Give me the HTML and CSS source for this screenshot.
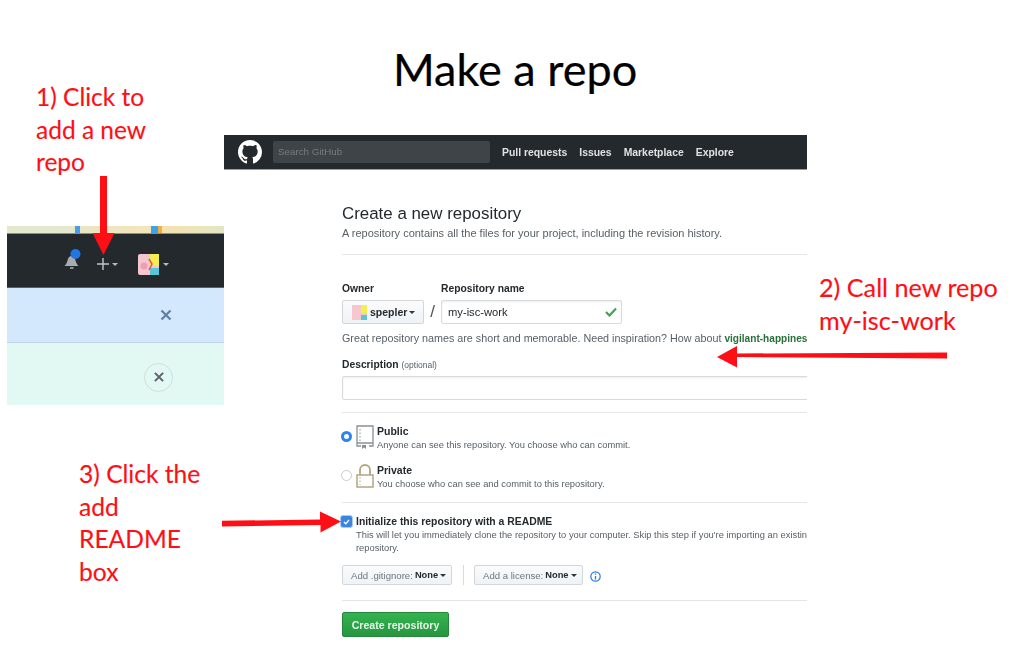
FILE: index.html
```html
<!DOCTYPE html>
<html lang="en">
<head>
    <meta charset="UTF-8">
    <meta name="viewport" content="width=device-width, initial-scale=1.0">
    <title>Make a repo</title>
    <link rel="stylesheet" href="styles.css">
</head>
<body>

<div class="slide">
    <h1 class="slide-title">Make a repo</h1>

    <p class="note note-one">1) Click to<br>add a new<br>repo</p>
    <p class="note note-two">2) Call new repo<br>my-isc-work</p>
    <p class="note note-three">3) Click the<br>add<br>README<br>box</p>

    <!-- cropped corner of the site header -->
    <div class="crop">
        <div class="crop-strip"></div>
        <div class="crop-nav">
            <svg class="bell" width="18" height="22" viewBox="0 0 18 22">
                <path d="M1.500 17c2-2 2.500-4 3.500-7 .5-2 2-3 3.500-3s3 1 3.500 3c1 3 1.500 5 3.500 7z" fill="#a9acae"/>
                <rect x="7" y="18" width="3.500" height="2" fill="#8d9093"/>
                <circle cx="12.500" cy="5" r="5" fill="#2176e6"/>
            </svg>
            <svg class="plus" width="12" height="12" viewBox="0 0 12 12">
                <path d="M6 0v12M0 6h12" stroke="#c4c6c8" stroke-width="1.400"/>
            </svg>
            <span class="caret caret-light caret-plus"></span>
            <svg class="avatar" width="21" height="21" viewBox="0 0 21 21">
                <rect width="21" height="21" rx="2" fill="#f6c6cf"/>
                <rect x="12" width="9" height="12" fill="#f4ee50"/>
                <rect x="12" y="14" width="9" height="7" fill="#58c6d8"/>
                <path d="M11 5l3 5-3 6" stroke="#e0564f" stroke-width="1.500" fill="none"/>
                <circle cx="6" cy="12" r="3.500" fill="#ef9db0"/>
            </svg>
            <span class="caret caret-light"></span>
        </div>
        <div class="crop-flash">
            <svg width="12" height="12" viewBox="0 0 12 12">
                <path d="M1.500 1.500l9 9M10.500 1.500l-9 9" stroke="#5f7fa6" stroke-width="2.200"/>
            </svg>
        </div>
        <div class="crop-notice">
            <span class="close-ring">
                <svg width="10" height="10" viewBox="0 0 11 11">
                    <path d="M1 1l9 9M10 1l-9 9" stroke="#5c6268" stroke-width="2.200"/>
                </svg>
            </span>
        </div>
    </div>

    <!-- new repository page -->
    <div class="page">
        <header class="topbar">
            <svg class="mark" width="24" height="24" viewBox="0 0 16 16">
                <path fill="#fff" d="M8 0C3.580 0 0 3.580 0 8c0 3.540 2.290 6.530 5.470 7.590.4.070.55-.17.55-.38 0-.19-.01-.82-.01-1.490-2.010.37-2.530-.49-2.690-.94-.09-.23-.48-.94-.82-1.130-.28-.15-.68-.52-.01-.53.63-.01 1.080.58 1.230.82.72 1.210 1.870.87 2.330.66.07-.52.28-.87.51-1.070-1.780-.2-3.640-.89-3.640-3.950 0-.87.31-1.590.82-2.150-.08-.2-.36-1.020.08-2.120 0 0 .67-.21 2.200.82.64-.18 1.320-.27 2-.27.68 0 1.360.09 2 .27 1.530-1.040 2.200-.82 2.200-.82.44 1.100.16 1.920.08 2.120.51.56.82 1.270.82 2.150 0 3.070-1.870 3.750-3.650 3.950.29.25.54.73.54 1.480 0 1.070-.01 1.930-.01 2.200 0 .21.15.46.55.38A8.013 8.013 0 0016 8c0-4.420-3.580-8-8-8z"/>
            </svg>
            <div class="search">Search GitHub</div>
            <nav class="links">
                <span>Pull requests</span>
                <span>Issues</span>
                <span>Marketplace</span>
                <span>Explore</span>
            </nav>
        </header>

        <main class="form">
            <h2 class="form-title">Create a new repository</h2>
            <p class="hint hint-lead">A repository contains all the files for your project, including the revision history.</p>
            <hr class="rule rule-head">

            <div class="name-row">
                <div class="field">
                    <label class="label">Owner</label>
                    <div class="btn owner">
                        <svg width="15" height="15" viewBox="0 0 15 15">
                            <rect width="15" height="15" rx="1" fill="#f6c6cf"/>
                            <rect x="9" width="6" height="8" fill="#f4ee50"/>
                            <rect x="9" y="10" width="6" height="5" fill="#58c6d8"/>
                        </svg>
                        <strong>spepler</strong>
                        <span class="caret"></span>
                    </div>
                </div>
                <span class="slash">/</span>
                <div class="field">
                    <label class="label">Repository name</label>
                    <div class="input input-name">
                        my-isc-work
                        <svg width="12" height="10" viewBox="0 0 12 10">
                            <path d="M1 5l3.500 3.500L11 1.500" stroke="#3fa64b" stroke-width="2.200" fill="none"/>
                        </svg>
                    </div>
                </div>
            </div>

            <p class="hint hint-name">Great repository names are short and memorable. Need inspiration? How about <strong class="suggest">vigilant-happines</strong></p>

            <label class="label label-desc">Description <span class="optional">(optional)</span></label>
            <div class="input input-desc"></div>
            <hr class="rule rule-desc">

            <div class="choice">
                <span class="radio radio-on"></span>
                <svg class="choice-icon" width="18" height="24" viewBox="0 0 18 24">
                    <path d="M1 1h16v17H1zM1 18v3h4M13 21h4v-3" stroke="#8b8f94" stroke-width="1.300" fill="none"/>
                    <path d="M4 4v12" stroke="#8b8f94" stroke-dasharray="1.500 2"/>
                    <path d="M6 20h4v4l-2-1.500L6 24z" fill="#8b8f94"/>
                </svg>
                <div class="choice-text">
                    <strong>Public</strong>
                    <p class="hint">Anyone can see this repository. You choose who can commit.</p>
                </div>
            </div>
            <div class="choice">
                <span class="radio"></span>
                <svg class="choice-icon" width="18" height="24" viewBox="0 0 18 24">
                    <path d="M4 11V6a5 5 0 0110 0v5" stroke="#b3a67f" stroke-width="1.800" fill="none"/>
                    <rect x="1" y="11" width="16" height="12" stroke="#b3a67f" stroke-width="1.500" fill="none"/>
                    <path d="M4 13v8" stroke="#b3a67f" stroke-dasharray="1.500 2"/>
                </svg>
                <div class="choice-text">
                    <strong>Private</strong>
                    <p class="hint">You choose who can see and commit to this repository.</p>
                </div>
            </div>
            <hr class="rule rule-choice">

            <div class="init">
                <span class="checkbox">
                    <svg width="7" height="6" viewBox="0 0 7 6">
                        <path d="M1 3l1.800 1.800L6 1" stroke="#fff" stroke-width="1.300" fill="none"/>
                    </svg>
                </span>
                <div class="init-text">
                    <strong>Initialize this repository with a README</strong>
                    <p class="hint">This will let you immediately clone the repository to your computer. Skip this step if you're importing an existin<br>repository.</p>
                </div>
            </div>

            <div class="addons">
                <div class="btn addon addon-ignore">Add .gitignore: <b>None</b><span class="caret"></span></div>
                <span class="addon-sep"></span>
                <div class="btn addon addon-license">Add a license: <b>None</b><span class="caret"></span></div>
                <svg class="info" width="11" height="11" viewBox="0 0 11 11">
                    <circle cx="5.500" cy="5.500" r="4.700" stroke="#2a7ae2" stroke-width="1.200" fill="none"/>
                    <path d="M5.500 2.500v1.300M5.500 5v3.500" stroke="#2a7ae2" stroke-width="1.300"/>
                </svg>
            </div>
            <hr class="rule rule-addons">

            <div class="create">Create repository</div>
        </main>
    </div>

    <svg class="arrows" width="1031" height="666" viewBox="0 0 1031 666">
        <g fill="#fe0f16">
            <path d="M100 176h7v57h7.500l-11 22-11-22h7.500z"/>
            <path d="M947 352.500v6l-210-1.500v10.500l-20-10.500 20-11v7.500z"/>
            <path d="M222 520.800l98-1.300v-8l21 10-20.500 11v-7.500l-98.500 1.500z"/>
        </g>
    </svg>
</div>

</body>
</html>
```

FILE: styles.css
```css
* {
    box-sizing: border-box;
}

body {
    margin: 0;
    background-color: white;
    font-family: "Liberation Sans", Arial, sans-serif;
}

/* the slide is a free canvas, things sit where the author dropped them */
.slide {
    position: relative;
    width: 1031px;
    height: 666px;
    overflow: hidden;
}

.slide-title {
    position: absolute;
    left: 393px;
    top: 41px;
    margin: 0;
    font-family: Lato, sans-serif;
    font-size: 45px;
    font-weight: 400;
    line-height: 56px;
    color: #000;
    -webkit-text-stroke: 0.2px #000;
}

.note {
    position: absolute;
    margin: 0;
    font-family: Lato, sans-serif;
    font-size: 25px;
    line-height: 32.500px;
    color: #fe0f16;
    -webkit-text-stroke: 0.15px #fe0f16;
}

.note-one {
    left: 36px;
    top: 81px;
    font-size: 24.500px;
}

.note-two {
    left: 819px;
    top: 271px;
    font-size: 25.200px;
}

.note-three {
    left: 79px;
    top: 458px;
    font-size: 24.600px;
}

.arrows {
    position: absolute;
    left: 0;
    top: 0;
}

/* header crop */
.crop {
    position: absolute;
    left: 7px;
    top: 226px;
    width: 217px;
    height: 179px;
    display: flex;
    flex-direction: column;
    filter: blur(0.4px);
}

.crop-strip {
    height: 8px;
    background: linear-gradient(90deg, #e4e8cc 0, #e4e8cc 68px, #4a9be8 68px, #4a9be8 73px, #e8e6c4 73px, #f3e6b8 144px, #3ba4e8 144px, #3ba4e8 151px, #f0b040 151px, #f0b040 155px, #f5e2b0 155px, #e2e6c4 100%);
    border-bottom: 1px solid #8a8e88;
}

.crop-nav {
    height: 54px;
    padding-top: 7px;
    padding-left: 56px;
    display: flex;
    align-items: center;
    background-color: #24292e;
    border-bottom: 1px solid #5a6066;
}

.bell {
    margin-top: -8px;
}

.plus {
    margin-left: 16px;
}

.caret-plus {
    margin-left: 7px;
    margin-right: 20px;
}

.avatar {
    margin-right: 1px;
}

.crop-flash {
    height: 55px;
    padding-right: 52px;
    display: flex;
    align-items: center;
    justify-content: flex-end;
    background-color: #d3e8fc;
    border-bottom: 1px solid #c0d6e6;
}

.crop-notice {
    flex: 1;
    padding-top: 6px;
    padding-right: 52px;
    display: flex;
    align-items: center;
    justify-content: flex-end;
    background-color: #e2f8f2;
}

.close-ring {
    width: 29px;
    height: 29px;
    margin-right: -1px;
    display: flex;
    align-items: center;
    justify-content: center;
    border: 1px solid #d0dfda;
    border-radius: 50%;
}

.caret {
    display: inline-block;
    width: 0;
    height: 0;
    margin-left: 3px;
    border-left: 3.500px solid transparent;
    border-right: 3.500px solid transparent;
    border-top: 3.500px solid #333;
}

.caret-light {
    border-top-color: #b9bbbd;
}

/* screenshot of the form */
.page {
    position: absolute;
    left: 224px;
    top: 135px;
    width: 583px;
    height: 510px;
    overflow: hidden;
    filter: blur(0.4px);
}

.topbar {
    height: 35px;
    padding-left: 14px;
    display: flex;
    align-items: center;
    background-color: #24292e;
    border-bottom: 1px solid #9a9da0;
}

.search {
    width: 217px;
    height: 22px;
    margin-left: 11px;
    padding-left: 5px;
    line-height: 22px;
    font-size: 9.800px;
    color: #777c81;
    background-color: #3f4448;
    border-radius: 2px;
}

.links {
    margin-left: 12px;
    display: flex;
    gap: 12px;
    font-size: 10.400px;
    font-weight: bold;
    color: #e0e1e2;
}

.form {
    width: 465px;
    margin-left: 118px;
    padding-top: 34px;
}

.form-title {
    margin: 0;
    font-size: 16.900px;
    font-weight: 400;
    line-height: 20px;
    color: #24292e;
}

.hint {
    margin: 0;
    font-size: 9.350px;
    line-height: 13px;
    color: #586069;
}

.form > .hint-lead {
    margin-top: 3px;
    font-size: 11px;
}

.rule {
    margin: 0;
    border: 0;
    border-top: 1px solid #e4e6e8;
}

.rule-head {
    margin-top: 14px;
}

.name-row {
    margin-top: 27px;
    display: flex;
    align-items: flex-end;
}

.label {
    display: block;
    margin-bottom: 5px;
    font-size: 10.300px;
    font-weight: bold;
    line-height: 13px;
    color: #24292e;
}

.btn {
    display: flex;
    align-items: center;
    border: 1px solid #d4d6d8;
    border-radius: 2px;
    background: linear-gradient(#fafbfc, #eff3f6);
    font-size: 9.600px;
    color: #24292e;
    white-space: nowrap;
}

.owner {
    width: 82px;
    height: 24px;
    padding-left: 9px;
    gap: 3px;
}

.owner strong {
    font-size: 10.500px;
}

.owner .caret {
    margin-left: -1.500px;
}

.slash {
    width: 17px;
    height: 24px;
    text-align: center;
    font-size: 17px;
    line-height: 24px;
    color: #555;
}

.input {
    border: 1px solid #d8dadc;
    border-radius: 2px;
    background-color: #fff;
    box-shadow: inset 0 1px 2px rgba(27, 31, 35, 0.08);
}

.input-name {
    width: 181px;
    height: 24px;
    padding: 0 4px 0 6px;
    display: flex;
    align-items: center;
    justify-content: space-between;
    font-size: 11.200px;
    color: #24292e;
}

.form > .hint-name {
    margin-top: 8px;
    font-size: 10.750px;
    white-space: nowrap;
}

.suggest {
    font-size: 10.100px;
    color: #28703a;
}

.label-desc {
    margin-top: 13px;
}

.optional {
    font-size: 8.500px;
    font-weight: 400;
    color: #586069;
}

.input-desc {
    width: 470px;
    height: 24px;
    margin-top: -1px;
}

.rule-desc {
    margin-top: 12px;
}

.choice {
    margin-top: 12px;
    display: flex;
    align-items: flex-start;
}

.radio {
    width: 11px;
    height: 11px;
    margin-top: 6px;
    margin-left: -1px;
    margin-right: 4px;
    flex: none;
    border: 1px solid #c8cacc;
    border-radius: 50%;
    background-color: #fff;
}

.radio-on {
    border: 3.500px solid #2b84f0;
}

.choice-icon {
    flex: none;
}

.choice-text {
    margin-left: 3px;
    font-size: 10.500px;
    line-height: 13px;
    color: #24292e;
}

.choice-text strong {
    display: block;
    margin-bottom: 1px;
}

.rule-choice {
    margin-top: 11px;
}

.init {
    margin-top: 12px;
    display: flex;
    align-items: flex-start;
}

.checkbox {
    width: 11px;
    height: 11px;
    margin-top: 1px;
    margin-left: -1px;
    margin-right: 4px;
    flex: none;
    display: flex;
    align-items: center;
    justify-content: center;
    border-radius: 2px;
    background-color: #3a85e0;
    box-shadow: 0 0 0 1px #a9ccf2;
}

.init-text {
    flex: none;
    font-size: 10.400px;
    line-height: 13px;
    color: #24292e;
}

.init-text strong {
    display: block;
    margin-bottom: 1px;
}

.init-text .hint {
    font-size: 9.350px;
    white-space: nowrap;
}

.addons {
    margin-top: 10px;
    display: flex;
    align-items: center;
}

.addon {
    height: 20px;
    padding: 0 6px 0 8px;
    color: #70767c;
    gap: 2px;
}

.addon .caret {
    margin-left: 0;
}

.addon-ignore {
    width: 110px;
}

.addon-license {
    width: 109px;
}

.addon b {
    font-size: 9.300px;
    color: #24292e;
}

.addon-sep {
    width: 1px;
    height: 20px;
    margin: 0 10px 0 11px;
    background-color: #d8dadc;
}

.info {
    margin-left: 7px;
    margin-top: 2px;
}

.rule-addons {
    margin-top: 15px;
}

.create {
    width: 107px;
    height: 25px;
    margin-top: 11px;
    text-align: center;
    font-size: 10.600px;
    font-weight: bold;
    line-height: 24px;
    color: #e8f5ea;
    background: linear-gradient(#34b34f, #26963f);
    border: 1px solid #23863a;
    border-radius: 2px;
}
```
